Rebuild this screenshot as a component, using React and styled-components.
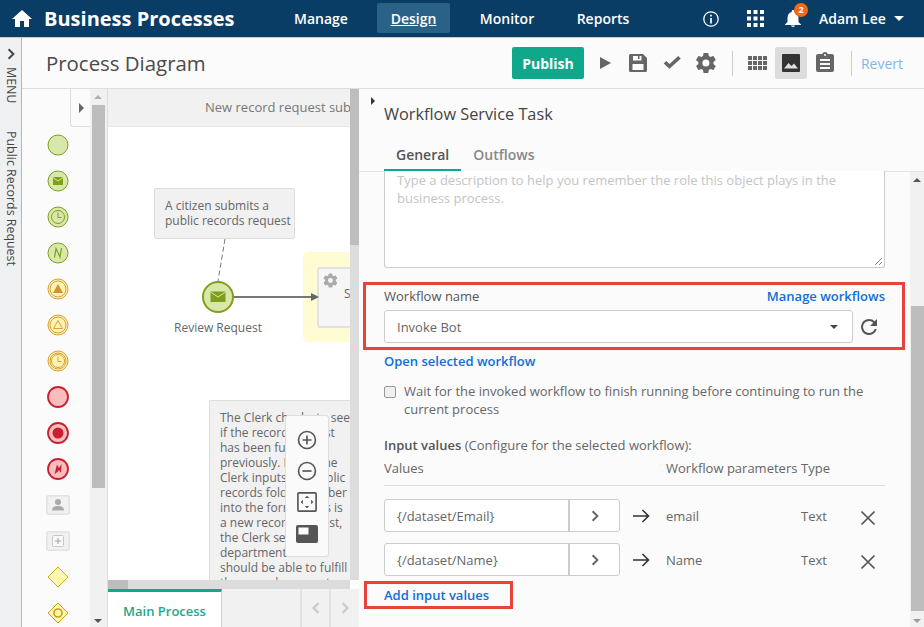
import React from 'react';
import styled, { createGlobalStyle } from 'styled-components';

const GREEN = '#7f9f1b';
const ORANGE = '#dba02f';
const RED = '#c8202f';
const BLUE = '#0f6fd6';
const TEAL = '#10a88a';
const HIGHLIGHT = '#e8423c';
const FONT = '"Open Sans", "Noto Sans", sans-serif';

const Global = createGlobalStyle`
  html, body { margin: 0; padding: 0; background: #fff; }
  * { box-sizing: border-box; }
  svg { display: block; }
`;

const Page = styled.div`
  width: 924px;
  height: 627px;
  overflow: hidden;
  display: flex;
  flex-direction: column;
  font-family: ${FONT};
  color: #555;
`;

const Header = styled.header`
  flex: 0 0 37px;
  display: flex;
  align-items: center;
  background: #0a3d66;
  color: #fff;
`;

const HomeLink = styled.div`
  width: 44px;
  display: flex;
  justify-content: center;
`;

const Brand = styled.div`
  width: 221px;
  font-size: 20px;
  font-weight: 700;
  white-space: nowrap;
`;

const Nav = styled.nav`
  display: flex;
  align-items: center;
`;

const NavItem = styled.div`
  width: ${p => p.$w}px;
  height: 30px;
  margin-top: -1px;
  display: flex;
  align-items: center;
  justify-content: center;
  font-size: 14px;
  font-weight: 600;
  border-radius: 2px;
  background: ${p => (p.$active ? '#2a6287' : 'transparent')};
  text-decoration: ${p => (p.$active ? 'underline' : 'none')};
`;

const HeaderRight = styled.div`
  margin-left: auto;
  display: flex;
  align-items: center;
`;

const HeaderIcon = styled.div`
  margin-right: ${p => p.$mr}px;
`;

const BellWrap = styled.div`
  position: relative;
  width: 16px;
  height: 17px;
  margin-right: 18px;
`;

const Badge = styled.span`
  position: absolute;
  top: -7px;
  right: -7px;
  width: 14px;
  height: 14px;
  border-radius: 50%;
  background: #f26a0f;
  font-size: 9px;
  font-weight: 700;
  line-height: 14px;
  text-align: center;
`;

const UserName = styled.div`
  display: flex;
  align-items: center;
  gap: 8px;
  font-size: 14px;
  font-weight: 600;
  width: 105px;
  white-space: nowrap;
`;

const Caret = styled.span`
  width: 0;
  height: 0;
  border-left: 5px solid transparent;
  border-right: 5px solid transparent;
  border-top: 5px solid #fff;
`;

const Body = styled.div`
  flex: 1;
  min-height: 0;
  display: flex;
`;

const Rail = styled.aside`
  flex: 0 0 22px;
  background: #eff0f2;
  border-right: 1px solid #b5b5b5;
  border-top: 1px solid #ccc;
  display: flex;
  flex-direction: column;
  align-items: center;
  padding-top: 10px;
`;

const RailText = styled.div`
  writing-mode: vertical-rl;
  font-size: 12.4px;
  line-height: 14px;
  color: #444;
  white-space: nowrap;
  margin-top: ${p => p.$mt}px;
`;

const Main = styled.main`
  flex: 1;
  min-width: 0;
  display: flex;
  flex-direction: column;
  background: #fbfbfb;
  border-top: 1px solid #ccc;
`;

const Toolbar = styled.div`
  flex: 0 0 51px;
  display: flex;
  align-items: center;
  padding: 0 21px 0 24px;
  border-bottom: 1px solid #ddd;
`;

const Title = styled.h1`
  margin: 0;
  font-size: 20.4px;
  font-weight: 400;
  color: #4a4a4a;
`;

const Tools = styled.div`
  margin-left: auto;
  display: flex;
  align-items: center;
`;

const PublishButton = styled.button`
  width: 72px;
  height: 32px;
  border: 0;
  border-radius: 2px;
  background: ${TEAL};
  color: #fff;
  font-family: inherit;
  font-size: 14px;
  font-weight: 700;
  margin-right: 5px;
  padding: 0;
`;

const ToolIcon = styled.div`
  width: ${p => p.$w}px;
  height: 32px;
  display: flex;
  align-items: center;
  justify-content: center;
  border-radius: 2px;
  background: ${p => (p.$active ? '#dcdcdc' : 'transparent')};
`;

const Divider = styled.div`
  width: 1px;
  height: 25px;
  background: #ccc;
  margin: ${p => p.$m};
`;

const Revert = styled.span`
  font-size: 14px;
  color: #86b5e8;
  margin-left: 9px;
`;

const Workspace = styled.div`
  flex: 1;
  min-height: 0;
  display: flex;
`;

const Palette = styled.div`
  flex: 0 0 68px;
  min-width: 0;
  position: relative;
  padding-top: 38px;
`;

const PaletteItems = styled.div`
  width: 72px;
  display: grid;
  grid-auto-rows: 36px;
  justify-items: center;
  align-items: center;
`;

const CollapseTab = styled.div`
  position: absolute;
  left: 48px;
  top: 0;
  width: 20px;
  height: 38px;
  background: #fbfbfb;
  border: 1px solid #ddd;
  border-right: 0;
  border-top: 0;
  border-radius: 0 0 0 3px;
  display: flex;
  align-items: center;
  padding-left: 8px;
  &::after {
    content: '';
    border-left: 5px solid #666;
    border-top: 5px solid transparent;
    border-bottom: 5px solid transparent;
  }
`;

const VScroll = styled.div`
  flex: 0 0 ${p => p.$w}px;
  background: ${p => p.$bg || '#f1f1f1'};
  position: relative;
`;

const Thumb = styled.div`
  position: absolute;
  left: ${p => p.$l}px;
  right: ${p => p.$r}px;
  top: ${p => p.$top}px;
  height: ${p => p.$h}px;
  background: #bdbdbd;
`;

const ScrollArrow = styled.span`
  position: absolute;
  left: ${p => p.$l}px;
  ${p => (p.$up ? 'top: 6px;' : 'bottom: 4px;')}
  border-left: 4px solid transparent;
  border-right: 4px solid transparent;
  ${p => (p.$up ? `border-bottom: 4px solid ${p.$color};` : `border-top: 4px solid ${p.$color};`)}
`;

const CanvasColumn = styled.div`
  flex: 0 0 252px;
  display: flex;
  flex-direction: column;
  min-width: 0;
  border-left: 1px solid #ddd;
`;

const CanvasRow = styled.div`
  flex: 1;
  min-height: 0;
  display: flex;
`;

const Canvas = styled.div`
  flex: 0 0 242px;
  position: relative;
  overflow: hidden;
  background: #fff;
`;

const LaneHeader = styled.div`
  height: 38px;
  background: #f1f1f1;
  border-bottom: 1px solid #e6e6e6;
  font-size: 13px;
  color: #777;
  line-height: 37px;
  padding-left: 97px;
  white-space: nowrap;
`;

/* free canvas: diagram nodes keep their own coordinates */
const Note = styled.div`
  position: absolute;
  left: ${p => p.$x}px;
  top: ${p => p.$y}px;
  width: ${p => p.$w}px;
  height: ${p => p.$h}px;
  padding: 9px 0 0 10px;
  background: #f1f1f1;
  border: 1px solid #ddd;
  border-radius: 2px;
  font-size: 12px;
  line-height: 15px;
  color: #666;
  overflow: hidden;
  white-space: nowrap;
`;

const NodeLabel = styled.div`
  position: absolute;
  left: 66px;
  top: 230px;
  font-size: 12px;
  color: #666;
  white-space: nowrap;
`;

const Swimlane = styled.div`
  position: absolute;
  left: 195px;
  top: 163px;
  width: 60px;
  height: 90px;
  background: #fffcd4;
  border-radius: 5px;
`;

const TaskBox = styled.div`
  position: absolute;
  left: 209px;
  top: 178px;
  width: 50px;
  height: 61px;
  background: #f6f6f6;
  border: 2px solid #e2e2e2;
  border-radius: 3px;
  font-size: 12px;
  color: #666;
  padding: 3px 0 0 3px;
`;

const TaskLabel = styled.div`
  margin: -3px 0 0 22px;
  line-height: 15px;
`;

const Diagram = styled.svg`
  position: absolute;
  left: 0;
  top: 0;
  overflow: visible;
`;

const ZoomPanel = styled.div`
  position: absolute;
  left: 177px;
  top: 326px;
  width: 44px;
  height: 142px;
  background: #fafafa;
  border: 1px solid #ddd;
  border-radius: 3px;
  display: flex;
  flex-direction: column;
  align-items: center;
  padding-top: 14px;
  gap: 11px;
`;

const HScrollRow = styled.div`
  flex: 0 0 9px;
  display: flex;
  background: #dcdcdc;
  position: relative;
`;

const HThumb = styled.div`
  width: 20px;
  background: #bdbdbd;
`;

const CornerSquare = styled.div`
  position: absolute;
  left: 242px;
  top: 0;
  width: 9px;
  height: 9px;
  background: #fff;
`;

const TabStrip = styled.div`
  flex: 0 0 38px;
  display: flex;
  background: #f1f1f1;
`;

const MainTab = styled.div`
  width: 114px;
  background: #fff;
  border-top: 3px solid ${TEAL};
  border-right: 1px solid #ccc;
  color: #1aa98d;
  font-size: 13px;
  font-weight: 600;
  display: flex;
  align-items: center;
  justify-content: center;
  padding-top: 3px;
`;

const TabPager = styled.div`
  width: 29px;
  display: flex;
  align-items: center;
  justify-content: center;
  border-left: 2px solid #e2e2e2;
  margin-left: ${p => p.$ml || 0}px;
`;

const Panel = styled.section`
  flex: 1;
  min-width: 0;
  display: flex;
  flex-direction: column;
  position: relative;
`;

const PanelArrow = styled.span`
  position: absolute;
  left: 12px;
  top: 8px;
  border-left: 4px solid #333;
  border-top: 4px solid transparent;
  border-bottom: 4px solid transparent;
`;

const PanelTitle = styled.h2`
  margin: 0;
  padding: 14px 0 0 25px;
  height: 50px;
  font-size: 16.3px;
  font-weight: 400;
  color: #444;
`;

const Tabs = styled.div`
  display: flex;
  height: 33px;
  padding-left: 25px;
  border-bottom: 1px solid #e2e2e2;
`;

const Tab = styled.div`
  height: 33px;
  padding: 0 12px;
  font-size: 14px;
  line-height: 32px;
  font-weight: 600;
  color: ${p => (p.$active ? '#555' : '#888')};
  border-bottom: ${p => (p.$active ? `3px solid ${TEAL}` : '0')};
`;

const PanelBody = styled.div`
  flex: 1;
  min-height: 0;
  display: flex;
`;

const PanelContent = styled.div`
  flex: 1;
  min-width: 0;
  padding: 0 25px;
`;

const Description = styled.div`
  height: 97px;
  margin-top: -1px;
  border: 1px solid #ccc;
  border-top: 0;
  border-radius: 0 0 3px 3px;
  background: #fff;
  padding: 0 12px;
  font-size: 13px;
  line-height: 18px;
  color: #c4c4c4;
  position: relative;
`;

const ResizeGrip = styled.svg`
  position: absolute;
  right: 1px;
  bottom: 1px;
`;

const Highlight = styled.div`
  margin: 14px -20px 0 -21px;
  padding: 0 17px 0 18px;
  height: 68px;
  border: 3px solid ${HIGHLIGHT};
`;

const FieldHead = styled.div`
  display: flex;
  justify-content: space-between;
  align-items: center;
  height: 22px;
  font-size: 13px;
  color: #555;
`;

const Link = styled.a`
  font-size: 13px;
  font-weight: 600;
  color: ${BLUE};
`;

const SelectRow = styled.div`
  display: flex;
  align-items: center;
  margin-top: 3px;
`;

const Select = styled.div`
  width: 469px;
  height: 33px;
  background: #fff;
  border: 1px solid #ccc;
  border-radius: 3px;
  display: flex;
  align-items: center;
  justify-content: space-between;
  padding: 0 14px 0 12px;
  font-size: 13px;
  color: #666;
  &::after {
    content: '';
    border-left: 4px solid transparent;
    border-right: 4px solid transparent;
    border-top: 4px solid #444;
  }
`;

const RefreshWrap = styled.div`
  width: 32px;
  display: flex;
  justify-content: center;
`;

const OpenRow = styled.div`
  margin-top: 1px;
  height: 18px;
  line-height: 18px;
`;

const CheckRow = styled.div`
  display: flex;
  margin-top: 13px;
  font-size: 13px;
  line-height: 18px;
  color: #666;
`;

const CheckBox = styled.span`
  flex: 0 0 12px;
  width: 12px;
  height: 12px;
  margin: 4px 8px 0 0;
  background: #f0f0f0;
  border: 1px solid #999;
  border-radius: 2px;
`;

const InputTitle = styled.div`
  margin-top: 18px;
  font-size: 13px;
  line-height: 18px;
  color: #666;
  strong { font-weight: 600; color: #555; }
`;

const ValuesHead = styled.div`
  display: grid;
  grid-template-columns: 282px 135px 1fr;
  height: 27px;
  margin-top: 5px;
  font-size: 13px;
  line-height: 18px;
  color: #666;
  border-bottom: 1px solid #ddd;
  white-space: nowrap;
`;

const ValueRow = styled.div`
  display: flex;
  align-items: center;
  height: 33px;
  margin-top: ${p => p.$mt}px;
  font-size: 13px;
  color: #666;
`;

const ValueBox = styled.div`
  width: 236px;
  height: 33px;
  display: flex;
  background: #fff;
  border: 1px solid #ccc;
  border-radius: 3px;
`;

const ValueText = styled.div`
  flex: 1;
  padding-left: 12px;
  line-height: 32px;
  border-right: 2px solid #ccc;
`;

const ValueGo = styled.div`
  width: 49px;
  display: flex;
  align-items: center;
  justify-content: center;
`;

const ArrowCell = styled.div`
  width: 46px;
  padding-left: 13px;
`;

const ParamName = styled.div`
  width: 135px;
`;

const ParamType = styled.div`
  width: 59px;
`;

const CrossWrap = styled.div`
  margin-top: 4px;
`;

const AddBox = styled.div`
  width: 149px;
  height: 28px;
  margin: 5px 0 0 -20px;
  padding-left: 17px;
  border: 3px solid ${HIGHLIGHT};
  line-height: 20px;
`;

const Icon = ({ size = 24, vb = '0 0 24 24', children, fill = 'currentColor' }) => (
  <svg width={size} height={size} viewBox={vb} fill={fill}>
    {children}
  </svg>
);

const Gear = ({ size, color }) => (
  <Icon size={size} fill={color}>
    <path d="M19.4 13c.04-.33.06-.66.06-1s-.02-.67-.06-1l2.1-1.65a.5.5 0 0 0 .12-.64l-2-3.46a.5.5 0 0 0-.61-.22l-2.49 1a7.3 7.3 0 0 0-1.73-1l-.38-2.65A.5.5 0 0 0 13.9 2h-4a.5.5 0 0 0-.49.42L9.03 5.07c-.62.26-1.2.6-1.73 1l-2.49-1a.5.5 0 0 0-.61.22l-2 3.46a.5.5 0 0 0 .12.64L4.42 11c-.04.33-.07.66-.07 1s.03.67.07 1l-2.1 1.65a.5.5 0 0 0-.12.64l2 3.46c.12.22.38.3.61.22l2.49-1c.53.4 1.11.74 1.73 1l.38 2.65c.04.24.25.42.49.42h4c.24 0 .45-.18.49-.42l.38-2.65c.62-.26 1.2-.6 1.73-1l2.49 1c.23.08.49 0 .61-.22l2-3.46a.5.5 0 0 0-.12-.64L19.4 13zM11.9 15.5a3.5 3.5 0 1 1 0-7 3.5 3.5 0 0 1 0 7z" />
  </Icon>
);

const Chevron = ({ size = 10, color = '#666', left, width = 2 }) => (
  <svg width={size} height={size} viewBox="0 0 10 10" fill="none">
    <path d={left ? 'M7 1 L3 5 L7 9' : 'M3 1 L7 5 L3 9'} stroke={color} strokeWidth={width} />
  </svg>
);

const ArrowRight = () => (
  <svg width="17" height="14" viewBox="0 0 17 14" fill="none">
    <path d="M0 7 H15.5 M9.5 1 L15.5 7 L9.5 13" stroke="#333" strokeWidth="1.6" />
  </svg>
);

const Cross = () => (
  <svg width="16" height="16" viewBox="0 0 16 16" fill="none">
    <path d="M1.5 1.5 L14.5 14.5 M14.5 1.5 L1.5 14.5" stroke="#555" strokeWidth="1.7" />
  </svg>
);

const Event = ({ color, fill, ring, children }) => (
  <svg width="22" height="22" viewBox="0 0 22 22">
    <circle cx="11" cy="11" r="10" fill={fill} stroke={color} strokeWidth={ring === 'thick' ? 1.8 : 1} />
    {ring === 'double' && <circle cx="11" cy="11" r="8" fill="none" stroke={color} strokeWidth="1" />}
    {children}
  </svg>
);

const ClockMark = ({ color }) => (
  <g fill="none" stroke={color} strokeWidth="1">
    <circle cx="11" cy="11" r="6.5" />
    <path d="M11 6.5 V11.5 H14.5" />
  </g>
);

const PaletteIcons = () => (
  <PaletteItems>
    <Event color={GREEN} fill="#d8e8aa" ring="single" />
    <Event color={GREEN} fill="#d8e8aa" ring="single">
      <path d="M6 7 H16 V15 H6 Z" fill={GREEN} />
      <path d="M6 7.5 L11 11 L16 7.5" fill="none" stroke="#d8e8aa" strokeWidth="1" />
    </Event>
    <Event color={GREEN} fill="#d8e8aa" ring="single"><ClockMark color={GREEN} /></Event>
    <Event color={GREEN} fill="#d8e8aa" ring="single">
      <path d="M7.5 15.5 L9 6.5 L13 15 L14.5 6" fill="none" stroke={GREEN} strokeWidth="1.2" />
    </Event>
    <Event color={ORANGE} fill="#fdf2b8" ring="double">
      <path d="M11 6 L16 15 H6 Z" fill="#cf9430" />
    </Event>
    <Event color={ORANGE} fill="#fdf2b8" ring="double">
      <path d="M11 6.5 L15.5 14.5 H6.5 Z" fill="none" stroke={ORANGE} strokeWidth="1" />
    </Event>
    <Event color={ORANGE} fill="#fdf2b8" ring="double"><ClockMark color={ORANGE} /></Event>
    <Event color={RED} fill="#f9bdbd" ring="thick" />
    <Event color={RED} fill="#f9bdbd" ring="thick"><circle cx="11" cy="11" r="5.5" fill={RED} /></Event>
    <Event color={RED} fill="#f9bdbd" ring="thick">
      <path d="M7.5 16 L10 6.5 L12 10 L14.5 6 L14 15 L12 12 L10.5 14 Z" fill={RED} />
    </Event>
    <svg width="24" height="20" viewBox="0 0 24 20">
      <rect x="0.75" y="0.75" width="22.5" height="18.5" rx="2" fill="#f1f1f1" stroke="#e2e2e2" strokeWidth="1.5" />
      <circle cx="12" cy="7" r="3" fill="#aaa" />
      <path d="M6 15.5 C6 12 9 11 12 11 C15 11 18 12 18 15.5 Z" fill="#aaa" />
    </svg>
    <svg width="24" height="20" viewBox="0 0 24 20">
      <rect x="0.75" y="0.75" width="22.5" height="18.5" rx="2" fill="#f1f1f1" stroke="#e2e2e2" strokeWidth="1.5" />
      <rect x="6.5" y="4.5" width="11" height="11" rx="1" fill="#f8f8f8" stroke="#c8c8c8" />
      <path d="M12 7 V13 M9 10 H15" stroke="#aaa" strokeWidth="1.2" />
    </svg>
    <svg width="22" height="22" viewBox="0 0 22 22">
      <path d="M11 1 L21 11 L11 21 L1 11 Z" fill="#fff8b0" stroke="#dca81e" />
    </svg>
    <svg width="22" height="22" viewBox="0 0 22 22">
      <path d="M11 1 L21 11 L11 21 L1 11 Z" fill="#fff8b0" stroke="#cf9a16" />
      <circle cx="11" cy="11" r="4" fill="none" stroke="#cf9a16" strokeWidth="1.6" />
    </svg>
  </PaletteItems>
);

const HeaderIcons = () => (
  <>
    <HeaderIcon $mr={28}>
      <Icon size={16} vb="0 0 16 16" fill="none">
        <circle cx="8" cy="8" r="7.2" stroke="#fff" strokeWidth="1.3" />
        <path d="M8 7 V12.5 M8 3.8 V5.5" stroke="#fff" strokeWidth="1.7" />
      </Icon>
    </HeaderIcon>
    <HeaderIcon $mr={21}>
      <Icon size={17} vb="0 0 17 17">
        {[0, 6.5, 13].flatMap(y => [0, 6.5, 13].map(x => <rect key={`${x}-${y}`} x={x} y={y} width="4" height="4" fill="#fff" />))}
      </Icon>
    </HeaderIcon>
    <BellWrap>
      <svg width="16" height="17" viewBox="0 0 16 17">
        <path fill="#fff" d="M8 0 A1.3 1.3 0 0 1 9.3 1.3 V2 C12 2.6 13.5 5 13.5 8 V12 L16 14.5 V15 H0 V14.5 L2.5 12 V8 C2.5 5 4 2.6 6.7 2 V1.3 A1.3 1.3 0 0 1 8 0 Z M6 15.6 H10 A2 1.4 0 0 1 6 15.6 Z" />
      </svg>
      <Badge>2</Badge>
    </BellWrap>
    <UserName>Adam Lee <Caret /></UserName>
  </>
);

const ToolbarIcons = () => (
  <Tools>
    <PublishButton>Publish</PublishButton>
    <ToolIcon $w={33}>
      <Icon size={14} vb="0 0 14 14"><path fill="#666" d="M2 1 L13 7 L2 13 Z" /></Icon>
    </ToolIcon>
    <ToolIcon $w={32}>
      <Icon size={18} vb="0 0 18 18">
        <path fill="#666" fillRule="evenodd" d="M1.5 0 H14 L18 4 V16.5 A1.5 1.5 0 0 1 16.5 18 H1.5 A1.5 1.5 0 0 1 0 16.5 V1.5 A1.5 1.5 0 0 1 1.5 0 Z M4 2 V6.5 H12.5 V2 H10.5 V5 H9 V2 Z M3.5 10 V16 H14.5 V10 Z" />
      </Icon>
    </ToolIcon>
    <ToolIcon $w={37}>
      <Icon size={20}><path fill="#666" d="M9 19 L2 12.5 L5 9.5 L9 13.2 L19.5 3.5 L22.5 6.5 Z" /></Icon>
    </ToolIcon>
    <ToolIcon $w={30}><Gear size={24} color="#666" /></ToolIcon>
    <Divider $m="0 9px 0 11px" />
    <ToolIcon $w={33}>
      <Icon size={20} vb="0 0 20 20">
        {[0, 5, 10].flatMap(y => [0, 5, 10, 15].map(x => <rect key={`${x}-${y}`} x={x} y={y + 3} width="4" height="4" fill="#666" />))}
      </Icon>
    </ToolIcon>
    <ToolIcon $w={32} $active>
      <Icon size={20} vb="0 0 20 20">
        <rect x="1" y="1" width="18" height="18" rx="1" fill="#333" />
        <path d="M3 15.5 L7.5 10 L10.5 13 L13 10.5 L17 15.5 Z" fill="#ddd" />
      </Icon>
    </ToolIcon>
    <ToolIcon $w={36}>
      <Icon size={24}><path fill="#666" d="M19 3h-4.2C14.4 1.8 13.3 1 12 1s-2.4.8-2.8 2H5a2 2 0 0 0-2 2v14a2 2 0 0 0 2 2h14a2 2 0 0 0 2-2V5a2 2 0 0 0-2-2zm-7 0a1 1 0 1 1 0 2 1 1 0 0 1 0-2zm5 15H7v-2h10zm0-4H7v-2h10zm0-4H7V8h10z" /></Icon>
    </ToolIcon>
    <Divider $m="0 0 0 8px" />
    <Revert>Revert</Revert>
  </Tools>
);

const ZoomIcons = () => (
  <ZoomPanel>
    <Icon size={20} vb="0 0 22 22" fill="none">
      <circle cx="11" cy="11" r="9.3" stroke="#555" strokeWidth="1.8" />
      <path d="M6 11 H16 M11 6 V16" stroke="#555" strokeWidth="1.8" />
    </Icon>
    <Icon size={20} vb="0 0 22 22" fill="none">
      <circle cx="11" cy="11" r="9.3" stroke="#555" strokeWidth="1.8" />
      <path d="M6 11 H16" stroke="#555" strokeWidth="1.8" />
    </Icon>
    <Icon size={20} vb="0 0 22 22" fill="none">
      <rect x="1" y="1" width="20" height="20" rx="1" stroke="#555" strokeWidth="1.8" />
      <path d="M11 4 L13.5 6.5 H8.5 Z M11 18 L13.5 15.5 H8.5 Z M4 11 L6.5 8.5 V13.5 Z M18 11 L15.5 8.5 V13.5 Z" fill="#555" />
    </Icon>
    <Icon size={22} vb="0 0 22 22">
      <rect x="0" y="2" width="22" height="18" rx="2" fill="#555" />
      <rect x="2.5" y="4.5" width="10" height="7" fill="#fafafa" />
    </Icon>
  </ZoomPanel>
);

const InputRow = ({ top, value, name }) => (
  <ValueRow $mt={top}>
    <ValueBox>
      <ValueText>{value}</ValueText>
      <ValueGo><Chevron size={12} color="#666" width={1.6} /></ValueGo>
    </ValueBox>
    <ArrowCell><ArrowRight /></ArrowCell>
    <ParamName>{name}</ParamName>
    <ParamType>Text</ParamType>
    <CrossWrap><Cross /></CrossWrap>
  </ValueRow>
);

export default function App() {
  return (
    <Page>
      <Global />
      <Header>
        <HomeLink>
          <Icon size={24}><path d="M10 20v-6h4v6h5v-8h3L12 3 2 12h3v8z" /></Icon>
        </HomeLink>
        <Brand>Business Processes</Brand>
        <Nav>
          <NavItem $w={112}>Manage</NavItem>
          <NavItem $w={73} $active>Design</NavItem>
          <NavItem $w={114}>Monitor</NavItem>
          <NavItem $w={78}>Reports</NavItem>
        </Nav>
        <HeaderRight>
          <HeaderIcons />
        </HeaderRight>
      </Header>
      <Body>
        <Rail>
          <Chevron size={12} color="#444" width={1.6} />
          <RailText $mt={7}>MENU</RailText>
          <RailText $mt={28}>Public Records Request</RailText>
        </Rail>
        <Main>
          <Toolbar>
            <Title>Process Diagram</Title>
            <ToolbarIcons />
          </Toolbar>
          <Workspace>
            <Palette>
              <CollapseTab />
              <PaletteIcons />
            </Palette>
            <VScroll $w={17}>
              <Thumb $l={2} $r={2} $top={16} $h={383} />
              <ScrollArrow $up $l={4} $color="#b0b0b0" />
              <ScrollArrow $l={4} $color="#555" />
            </VScroll>
            <CanvasColumn>
              <CanvasRow>
                <Canvas>
                  <LaneHeader>New record request sub</LaneHeader>
                  <Note $x={46} $y={99} $w={141} $h={51}>A citizen submits a<br />public records request</Note>
                  <Swimlane />
                  <TaskBox>
                    <Gear size={17} color="#aaa" />
                    <TaskLabel>S</TaskLabel>
                  </TaskBox>
                  <Diagram width="242" height="491">
                    <path d="M117 150 L110 192" stroke="#777" strokeDasharray="5 3" fill="none" />
                    <circle cx="110" cy="208" r="15" fill="#d8e8aa" stroke={GREEN} strokeWidth="2" />
                    <path d="M102.5 202.5 H117.5 V213 H102.5 Z" fill={GREEN} />
                    <path d="M102.5 203 L110 208 L117.5 203" fill="none" stroke="#d8e8aa" strokeWidth="1" />
                    <path d="M126 208 H205" stroke="#777" strokeWidth="2" />
                    <path d="M203 204 L211 208 L203 212 Z" fill="#666" />
                  </Diagram>
                  <NodeLabel>Review Request</NodeLabel>
                  <Note $x={101} $y={311} $w={150} $h={189}>
                    The Clerk checks to see<br />if the record request<br />has been fulfilled<br />previously. If not, the<br />Clerk inputs the public<br />records folder number<br />into the form. If this is<br />a new record request,<br />the Clerk sends the<br />department who<br />should be able to fulfill<br />the records request
                  </Note>
                  <ZoomIcons />
                </Canvas>
                <VScroll $w={9} $bg="#dcdcdc">
                  <Thumb $l={0} $r={0} $top={0} $h={156} />
                </VScroll>
              </CanvasRow>
              <HScrollRow>
                <HThumb />
                <CornerSquare />
              </HScrollRow>
              <TabStrip>
                <MainTab>Main Process</MainTab>
                <TabPager $ml={78}><Chevron size={12} color="#ccc" left /></TabPager>
                <TabPager><Chevron size={12} color="#ccc" /></TabPager>
              </TabStrip>
            </CanvasColumn>
            <Panel>
              <PanelArrow />
              <PanelTitle>Workflow Service Task</PanelTitle>
              <Tabs>
                <Tab $active>General</Tab>
                <Tab>Outflows</Tab>
              </Tabs>
              <PanelBody>
                <PanelContent>
                  <Description>
                    Type a description to help you remember the role this object plays in the business process.
                    <ResizeGrip width="10" height="10" viewBox="0 0 10 10">
                      <path d="M2 9 L9 2 M6 9 L9 6" stroke="#888" />
                    </ResizeGrip>
                  </Description>
                  <Highlight>
                    <FieldHead>Workflow name <Link>Manage workflows</Link></FieldHead>
                    <SelectRow>
                      <Select>Invoke Bot</Select>
                      <RefreshWrap>
                        <Icon size={24}>
                          <path fill="#555" d="M17.65 6.35A7.95 7.95 0 0 0 12 4a8 8 0 1 0 7.73 10h-2.08A6 6 0 1 1 12 6c1.66 0 3.14.69 4.22 1.78L13 11h7V4l-2.35 2.35z" />
                        </Icon>
                      </RefreshWrap>
                    </SelectRow>
                  </Highlight>
                  <OpenRow><Link>Open selected workflow</Link></OpenRow>
                  <CheckRow>
                    <CheckBox />
                    <span>Wait for the invoked workflow to finish running before continuing to run the current process</span>
                  </CheckRow>
                  <InputTitle><strong>Input values</strong> (Configure for the selected workflow):</InputTitle>
                  <ValuesHead>
                    <span>Values</span>
                    <span>Workflow parameters</span>
                    <span>Type</span>
                  </ValuesHead>
                  <InputRow top={13} value="{/dataset/Email}" name="email" />
                  <InputRow top={11} value="{/dataset/Name}" name="Name" />
                  <AddBox><Link>Add input values</Link></AddBox>
                </PanelContent>
                <VScroll $w={14}>
                  <Thumb $l={1} $r={0} $top={134} $h={305} />
                  <ScrollArrow $up $l={3} $color="#555" />
                  <ScrollArrow $l={3} $color="#999" />
                </VScroll>
              </PanelBody>
            </Panel>
          </Workspace>
        </Main>
      </Body>
    </Page>
  );
}
